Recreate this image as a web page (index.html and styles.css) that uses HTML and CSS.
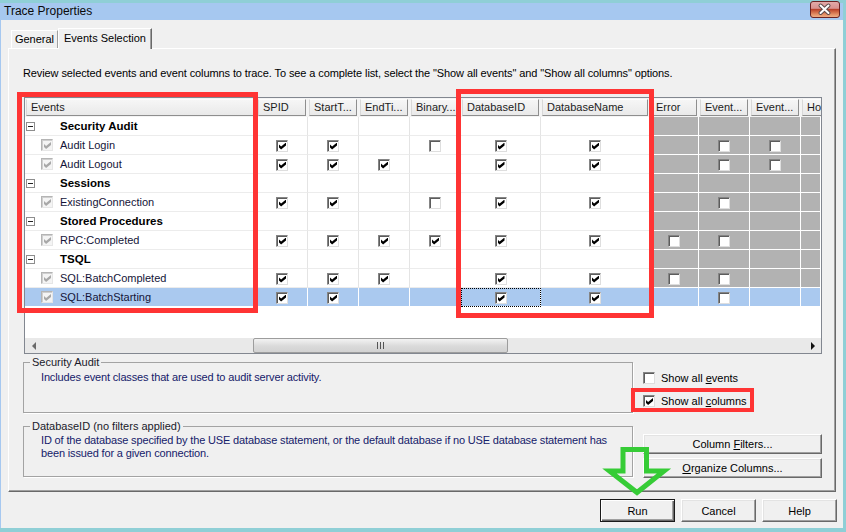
FILE: index.html
```html
<!DOCTYPE html>
<html lang="en">
<head>
    <meta charset="UTF-8">
    <title>Trace Properties</title>
    <link rel="stylesheet" href="styles.css">
</head>
<body>

<div class="window">
    <div class="titlebar">
        <span class="title">Trace Properties</span>
        <span class="close-btn">
            <svg width="29" height="16" viewBox="0 0 29 16">
                <path d="M10.5 4.5 L18.5 12 M18.5 4.5 L10.5 12" stroke="#5a4a4a" stroke-width="4" stroke-linecap="round"/>
                <path d="M10.5 4.5 L18.5 12 M18.5 4.5 L10.5 12" stroke="#fff" stroke-width="2" stroke-linecap="round"/>
            </svg>
        </span>
    </div>

    <div class="client">
        <div class="tabs">
            <span class="tab">General</span>
            <span class="tab active">Events Selection</span>
        </div>

        <div class="tab-panel">
            <p class="intro">Review selected events and event columns to trace. To see a complete list, select the "Show all events" and "Show all columns" options.</p>

            <div class="grid">
                <div class="grid-body">
                    <table class="events">
                        <colgroup>
                            <col class="w-ev"><col class="w-s"><col class="w-s"><col class="w-s"><col class="w-s">
                            <col class="w-id"><col class="w-name"><col class="w-err"><col class="w-s"><col class="w-s"><col class="w-last">
                        </colgroup>
                        <thead>
                            <tr>
                                <th><div class="hd">Events</div></th>
                                <th><div class="hd">SPID</div></th>
                                <th><div class="hd">StartT...</div></th>
                                <th><div class="hd">EndTi...</div></th>
                                <th><div class="hd">Binary...</div></th>
                                <th><div class="hd">DatabaseID</div></th>
                                <th><div class="hd">DatabaseName</div></th>
                                <th><div class="hd">Error</div></th>
                                <th><div class="hd">Event...</div></th>
                                <th><div class="hd">Event...</div></th>
                                <th><div class="hd">Ho</div></th>
                            </tr>
                        </thead>
                        <tbody>
                            <tr class="cat">
                                <td><div class="evc"><span class="slot"><span class="tog"></span></span><b>Security Audit</b></div></td>
                                <td></td><td></td><td></td><td></td><td></td><td></td>
                                <td class="off"></td><td class="off"></td><td class="off"></td><td class="off"></td>
                            </tr>
                            <tr>
                                <td><div class="evc"><span class="slot"><span class="cb on dis"></span></span>Audit Login</div></td>
                                <td><span class="cb on"></span></td><td><span class="cb on"></span></td><td></td>
                                <td><span class="cb"></span></td><td><span class="cb on"></span></td><td><span class="cb on"></span></td>
                                <td class="off"></td><td class="off"><span class="cb"></span></td><td class="off"><span class="cb"></span></td><td class="off"></td>
                            </tr>
                            <tr>
                                <td><div class="evc"><span class="slot"><span class="cb on dis"></span></span>Audit Logout</div></td>
                                <td><span class="cb on"></span></td><td><span class="cb on"></span></td><td><span class="cb on"></span></td>
                                <td></td><td><span class="cb on"></span></td><td><span class="cb on"></span></td>
                                <td class="off"></td><td class="off"><span class="cb"></span></td><td class="off"><span class="cb"></span></td><td class="off"></td>
                            </tr>
                            <tr class="cat">
                                <td><div class="evc"><span class="slot"><span class="tog"></span></span><b>Sessions</b></div></td>
                                <td></td><td></td><td></td><td></td><td></td><td></td>
                                <td class="off"></td><td class="off"></td><td class="off"></td><td class="off"></td>
                            </tr>
                            <tr>
                                <td><div class="evc"><span class="slot"><span class="cb on dis"></span></span>ExistingConnection</div></td>
                                <td><span class="cb on"></span></td><td><span class="cb on"></span></td><td></td>
                                <td><span class="cb"></span></td><td><span class="cb on"></span></td><td><span class="cb on"></span></td>
                                <td class="off"></td><td class="off"><span class="cb"></span></td><td class="off"></td><td class="off"></td>
                            </tr>
                            <tr class="cat">
                                <td><div class="evc"><span class="slot"><span class="tog"></span></span><b>Stored Procedures</b></div></td>
                                <td></td><td></td><td></td><td></td><td></td><td></td>
                                <td class="off"></td><td class="off"></td><td class="off"></td><td class="off"></td>
                            </tr>
                            <tr>
                                <td><div class="evc"><span class="slot"><span class="cb on dis"></span></span>RPC:Completed</div></td>
                                <td><span class="cb on"></span></td><td><span class="cb on"></span></td><td><span class="cb on"></span></td>
                                <td><span class="cb on"></span></td><td><span class="cb on"></span></td><td><span class="cb on"></span></td>
                                <td class="off"><span class="cb"></span></td><td class="off"><span class="cb"></span></td><td class="off"></td><td class="off"></td>
                            </tr>
                            <tr class="cat">
                                <td><div class="evc"><span class="slot"><span class="tog"></span></span><b>TSQL</b></div></td>
                                <td></td><td></td><td></td><td></td><td></td><td></td>
                                <td class="off"></td><td class="off"></td><td class="off"></td><td class="off"></td>
                            </tr>
                            <tr>
                                <td><div class="evc"><span class="slot"><span class="cb on dis"></span></span>SQL:BatchCompleted</div></td>
                                <td><span class="cb on"></span></td><td><span class="cb on"></span></td><td><span class="cb on"></span></td>
                                <td></td><td><span class="cb on"></span></td><td><span class="cb on"></span></td>
                                <td class="off"><span class="cb"></span></td><td class="off"><span class="cb"></span></td><td class="off"></td><td class="off"></td>
                            </tr>
                            <tr class="selected">
                                <td><div class="evc"><span class="slot"><span class="cb on dis"></span></span>SQL:BatchStarting</div></td>
                                <td><span class="cb on"></span></td><td><span class="cb on"></span></td><td></td>
                                <td></td><td class="focus"><span class="cb on"></span></td><td><span class="cb on"></span></td>
                                <td></td><td><span class="cb"></span></td><td></td><td></td>
                            </tr>
                        </tbody>
                    </table>
                </div>
                <div class="hscroll">
                    <span class="arr"><span class="tri left"></span></span>
                    <div class="track"><span class="thumb"><span class="grip"></span></span></div>
                    <span class="arr"><span class="tri right"></span></span>
                </div>
            </div>

            <div class="lower">
                <div class="groups">
                    <div class="group">
                        <span class="group-title">Security Audit</span>
                        <p class="group-text">Includes event classes that are used to audit server activity.</p>
                    </div>
                    <div class="group">
                        <span class="group-title">DatabaseID (no filters applied)</span>
                        <p class="group-text">ID of the database specified by the USE database statement, or the default database if no USE database statement has<br>been issued for a given connection.</p>
                    </div>
                </div>
                <div class="options">
                    <label class="opt"><span class="cb"></span><span>Show all <u>e</u>vents</span></label>
                    <label class="opt opt-cols"><span class="cb on"></span><span>Show all <u>c</u>olumns</span></label>
                    <button class="btn side filters">Column <u>F</u>ilters...</button>
                    <button class="btn side"><u>O</u>rganize Columns...</button>
                </div>
            </div>
        </div>

        <div class="footer">
            <button class="btn default">Run</button>
            <button class="btn">Cancel</button>
            <button class="btn">Help</button>
        </div>
    </div>

    <!-- пометки поверх скриншота -->
    <div class="mark mark-events"></div>
    <div class="mark mark-db"></div>
    <div class="mark mark-cols"></div>
    <svg class="arrow" width="846" height="532" viewBox="0 0 846 532">
        <path d="M623 471 L623 449.5 L646.5 449.5 L646.5 471 L664 471 L637 492.5 L609.5 471 Z" fill="none" stroke="#36cc36" stroke-width="5" stroke-linejoin="miter"/>
    </svg>
</div>

</body>
</html>
```

FILE: styles.css
```css
* {
    box-sizing: border-box;
}

html, body {
    margin: 0;
    background: #f0f0f0;
}

body {
    font-family: "Liberation Sans", Arial, sans-serif;
    font-size: 11px;
    color: #000;
}

/* Окно */
.window {
    position: relative;
    width: 846px;
    height: 532px;
    padding: 3px 3px 4px 0;
    background: #8fcfd6;
    overflow: hidden;
}

.titlebar {
    display: flex;
    justify-content: space-between;
    align-items: flex-start;
    height: 17px;
    background: #a6c8f0;
}

.title {
    padding-left: 4px;
    font-size: 12px;
    line-height: 16px;
    color: #0a0a0a;
}

.close-btn {
    width: 30px;
    height: 17px;
    margin: -2px 3px 0 0;
    border: 1px solid #6a2424;
    border-radius: 3px;
    background: linear-gradient(#e2aaa8 0%, #d8928f 42%, #b9432c 50%, #c95a3b 60%, #e5946a 85%, #eeac84 100%);
}

.close-btn svg {
    display: block;
    margin: -1px 0 0 -1px;
}

.client {
    height: 508px;
    border-left: 1px solid #a6c8f0;
    background: #f0f0f0;
}

/* Вкладки */
.tabs {
    display: flex;
    align-items: flex-end;
    height: 28px;
    padding: 8px 0 0 10px;
}

.tab {
    width: 47px;
    height: 18px;
    border: 1px solid #fff;
    border-bottom: none;
    border-right-color: #a0a0a0;
    text-align: center;
    line-height: 17px;
}

.tab.active {
    position: relative;
    z-index: 1;
    width: 94px;
    height: 21px;
    margin-bottom: -1px;
    border-right-color: #696969;
    background: #f0f0f0;
    line-height: 18px;
    box-shadow: inset -1px 0 #a0a0a0;
}

.tab-panel {
    height: 444px;
    margin: 0 7px;
    border: 1px solid;
    border-color: #fff #696969 #696969 #fff;
    box-shadow: inset -1px -1px #a0a0a0;
}

.intro {
    margin: 0;
    padding: 18px 0 0 14px;
    line-height: 13px;
    letter-spacing: -0.1px;
}

/* Таблица событий */
.grid {
    width: 798px;
    height: 257px;
    margin: 17px 0 0 15px;
    border: 1px solid #828790;
    background: #fff;
}

.grid-body {
    height: 240px;
    overflow: hidden;
}

.events {
    width: 796px;
    table-layout: fixed;
    border-collapse: separate;
    border-spacing: 0;
    color: #141438;
}

.w-ev { width: 232px; }
.w-s { width: 51px; }
.w-id { width: 80px; }
.w-name { width: 109px; }
.w-err { width: 49px; }
.w-last { width: 20px; }

.events th {
    height: 19px;
    padding: 0;
    font-weight: normal;
    text-align: left;
    background: #f4f4f4;
}

.hd {
    height: 17px;
    margin: 1px 2px 1px 1px;
    padding-left: 4px;
    border: 1px solid;
    border-color: #fdfdfd #8e8e8e #8e8e8e #d8d8d8;
    background: linear-gradient(#f6f6f6, #e9e9e9);
    color: #1c1c1c;
    line-height: 15px;
    white-space: nowrap;
    overflow: hidden;
}

.events th:last-child .hd {
    margin-right: 0;
    border-right: none;
}

.events td {
    height: 19px;
    padding: 0;
    border-right: 1px solid #e4e4e4;
    border-bottom: 1px solid #ececec;
    text-align: center;
    vertical-align: middle;
    line-height: 12px;
}

.events td.off {
    background: #b2b2b2;
    border-color: #fff;
}

.events tr.selected td {
    background: #aac9ef;
    border-color: #fff;
}

.events td.focus {
    outline: 1px dotted #000;
    outline-offset: -1px;
}

.evc {
    display: flex;
    align-items: center;
    height: 18px;
    text-align: left;
    white-space: nowrap;
}

.evc b {
    font-size: 11.5px;
    color: #000;
}

.slot {
    display: flex;
    align-items: center;
    width: 35px;
    flex-shrink: 0;
}

.slot .cb {
    margin-left: 16px;
}

.tog {
    position: relative;
    width: 9px;
    height: 9px;
    margin-left: 1px;
    border: 1px solid #8d8d8d;
    background: #fff;
}

.tog::after {
    content: "";
    position: absolute;
    left: 1px;
    top: 3px;
    width: 5px;
    height: 1px;
    background: #222;
}

/* Флажки */
.cb {
    position: relative;
    display: inline-block;
    width: 12px;
    height: 12px;
    border: 1px solid;
    border-color: #858585 #dedede #dedede #858585;
    background: #fff;
    box-shadow: inset 1px 1px 0 #5c5c5c;
    vertical-align: middle;
}

.cb.on::after {
    content: "";
    position: absolute;
    left: 2px;
    top: 2px;
    width: 7px;
    height: 7px;
    background: #000;
    clip-path: polygon(0 28%, 30% 58%, 100% 0, 100% 42%, 30% 100%, 0 70%);
}

.cb.dis {
    border-color: #b4b4b4 #e6e6e6 #e6e6e6 #b4b4b4;
    box-shadow: inset 1px 1px 0 #cfcfcf;
    background: #f4f4f4;
}

.cb.dis::after {
    background: #a8a8a8;
}

/* Горизонтальная прокрутка */
.hscroll {
    display: flex;
    height: 15px;
    background: #e9e9e9;
}

.arr {
    display: flex;
    align-items: center;
    justify-content: center;
    width: 17px;
}

.tri {
    width: 0;
    height: 0;
    border-top: 4px solid transparent;
    border-bottom: 4px solid transparent;
}

.tri.left {
    border-right: 4px solid #6a6a6a;
}

.tri.right {
    border-left: 4px solid #111;
}

.track {
    flex: 1;
    display: flex;
    align-items: center;
}

.thumb {
    display: flex;
    align-items: center;
    justify-content: center;
    width: 255px;
    height: 15px;
    margin-left: 211px;
    border: 1px solid #9d9d9d;
    border-radius: 2px;
    background: linear-gradient(#f3f3f3, #dadada 55%, #d2d2d2);
}

.grip {
    width: 7px;
    height: 7px;
    background: repeating-linear-gradient(90deg, #555 0 1px, transparent 1px 3px);
}

/* Нижняя часть панели */
.lower {
    display: flex;
    margin: 2px 0 0 14px;
}

.groups {
    width: 610px;
}

.group {
    height: 51px;
    margin-top: 6px;
    border: 1px solid #a3a3a3;
    box-shadow: 1px 1px 0 #fff;
}

.group + .group {
    margin-top: 13px;
}

.group-title {
    display: table;
    margin: -7px 0 0 6px;
    padding: 0 2px;
    background: #f0f0f0;
    line-height: 13px;
    color: #1a1a2a;
}

.group-text {
    margin: 2px 0 0 17px;
    line-height: 13px;
    letter-spacing: -0.15px;
    color: #15206a;
}

.group + .group .group-text {
    margin-top: 1px;
}

.options {
    width: 179px;
    margin-left: 10px;
}

.opt {
    display: flex;
    align-items: center;
    height: 12px;
    margin-top: 16px;
    line-height: 12px;
    white-space: nowrap;
}

.opt .cb {
    margin-right: 6px;
}

.opt-cols {
    margin-top: 11px;
}

/* Кнопки */
.btn {
    display: block;
    padding: 0;
    border: 1px solid;
    border-color: #fff #696969 #696969 #fff;
    background: #f0f0f0;
    box-shadow: inset -1px -1px #a0a0a0, inset 1px 1px #e3e3e3;
    font-family: "Liberation Sans", Arial, sans-serif;
    font-size: 11px;
    color: #000;
}

.btn.side {
    width: 179px;
    height: 20px;
    margin-top: 4px;
}

.btn.filters {
    margin-top: 27px;
}

.footer {
    display: flex;
    justify-content: flex-end;
    gap: 6px;
    margin-top: 7px;
    padding-right: 6px;
}

.footer .btn {
    width: 75px;
    height: 23px;
}

.btn.default {
    border-color: #1a1a1a;
    box-shadow: inset 1px 1px #fff, inset -1px -1px #696969, inset -2px -2px #a0a0a0;
}

/* Пометки */
.mark {
    position: absolute;
    border: 5px solid #ff3434;
}

.mark-events {
    left: 17px;
    top: 92px;
    width: 241px;
    height: 221px;
}

.mark-db {
    left: 456px;
    top: 89px;
    width: 198px;
    height: 229px;
}

.mark-cols {
    left: 631px;
    top: 388px;
    width: 123px;
    height: 24px;
    border-width: 4px;
}

.arrow {
    position: absolute;
    left: 0;
    top: 0;
    pointer-events: none;
}
```
